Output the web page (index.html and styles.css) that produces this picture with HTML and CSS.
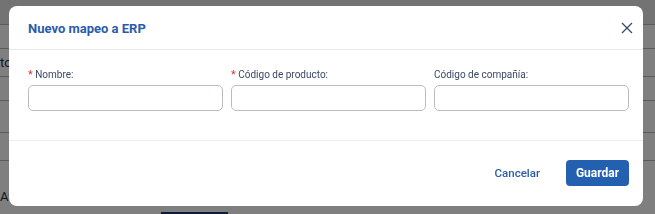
FILE: index.html
```html
<!DOCTYPE html>
<html lang="es">
<head>
    <meta charset="UTF-8">
    <meta name="viewport" content="width=device-width, initial-scale=1.0">
    <title>Nuevo mapeo a ERP</title>
    <link rel="stylesheet" href="styles.css">
</head>
<body>
    <!-- Pagina de fondo (tabla de mapeos) -->
    <div class="page">
        <div class="page-head"></div>
        <div class="page-row row-sm"></div>
        <div class="page-row row-md"><span class="cell-text">to</span></div>
        <div class="page-row row-sm"></div>
        <div class="page-row row-lg"></div>
        <div class="page-row row-md"><span class="cell-link">P</span></div>
        <div class="page-foot">
            <span class="cell-text">Afiliado</span>
            <span class="tab-bar"></span>
        </div>
    </div>

    <div class="overlay"></div>

    <!-- Modal -->
    <div class="modal">
        <div class="modal-header">
            <h2 class="modal-title">Nuevo mapeo a ERP</h2>
            <button class="modal-close" aria-label="Cerrar">
                <svg width="12" height="12" viewBox="0 0 12 12">
                    <path d="M1 1 L11 11 M11 1 L1 11" stroke="#3d4a66" stroke-width="1.3" fill="none"/>
                </svg>
            </button>
        </div>

        <div class="modal-body">
            <div class="field">
                <label><span class="req">*</span> Nombre:</label>
                <input type="text">
            </div>
            <div class="field">
                <label><span class="req">*</span> Código de producto:</label>
                <input type="text">
            </div>
            <div class="field">
                <label>Código de compañía:</label>
                <input type="text">
            </div>
        </div>

        <div class="modal-footer">
            <button class="btn-link">Cancelar</button>
            <button class="btn-primary">Guardar</button>
        </div>
    </div>
</body>
</html>
```

FILE: styles.css
```css
* {
    margin: 0;
    padding: 0;
    box-sizing: border-box;
}

body {
    font-family: 'Roboto', 'Liberation Sans', sans-serif;
    background: #fff;
    width: 655px;
    height: 214px;
    overflow: hidden;
}

/* pagina sotto il modal */
.page {
    width: 655px;
    height: 214px;
    display: flex;
    flex-direction: column;
}

.page-head {
    height: 25px;
    background: #e6e6e6;
    border-bottom: 1px solid #b5b5b5;
}

.page-row {
    border-bottom: 1px solid #b5b5b5;
    display: flex;
    align-items: center;
    font-size: 13px;
    color: #1f2d4a;
}

.row-sm { height: 24px; }
.row-md { height: 28px; }
.row-lg { height: 32px; }

.cell-text {
    margin-left: 0;
    font-size: 13px;
    color: #1f2d4a;
}

.cell-link {
    margin-left: 10px;
    font-size: 16px;
    color: #1d4d9c;
}

.page-foot {
    flex: 1;
    position: relative;
    display: flex;
    align-items: center;
    padding-top: 18px;
}

.tab-bar {
    position: absolute;
    left: 161px;
    bottom: 0;
    width: 67px;
    height: 2px;
    background: #1d3b6e;
}

.overlay {
    position: fixed;
    inset: 0;
    background: rgba(0, 0, 0, 0.5);
}

/* modal */
.modal {
    position: fixed;
    left: 9px;
    top: 6px;
    width: 634px;
    height: 200px;
    background: #fff;
    border-radius: 8px;
    display: flex;
    flex-direction: column;
}

.modal-header {
    height: 44px;
    padding: 0 5px 0 19px;
    display: flex;
    align-items: center;
    justify-content: space-between;
    border-bottom: 1px solid #e8e8e8;
}

.modal-title {
    font-size: 13px;
    font-weight: 700;
    color: #2a5caa;
    margin-top: 1px;
}

.modal-close {
    background: none;
    border: none;
    width: 22px;
    height: 22px;
    display: flex;
    align-items: center;
    justify-content: center;
    cursor: pointer;
}

.modal-body {
    height: 91px;
    padding: 18px 14px 0 19px;
    display: flex;
    gap: 8px;
    border-bottom: 1px solid #ececec;
}

.field {
    width: 195px;
    flex-shrink: 0;
    display: flex;
    flex-direction: column;
}

.field label {
    font-size: 10px;
    color: #3a4766;
    height: 17px;
    line-height: 14px;
}

.req {
    color: #d9363e;
    font-size: 11px;
}

.field input {
    height: 26px;
    border: 1px solid #b9bcc4;
    border-radius: 5px;
    background: #fff;
    outline: none;
}

.modal-footer {
    flex: 1;
    display: flex;
    align-items: center;
    justify-content: flex-end;
    padding: 0 14px 2px 0;
    gap: 26px;
}

.btn-link {
    background: none;
    border: none;
    font-family: inherit;
    font-size: 11.5px;
    font-weight: 500;
    color: #2a5caa;
    cursor: pointer;
}

.btn-primary {
    background: #2460b0;
    border: none;
    border-radius: 4px;
    width: 63px;
    height: 26px;
    font-family: inherit;
    font-size: 12px;
    font-weight: 700;
    color: #fff;
    cursor: pointer;
}
```
